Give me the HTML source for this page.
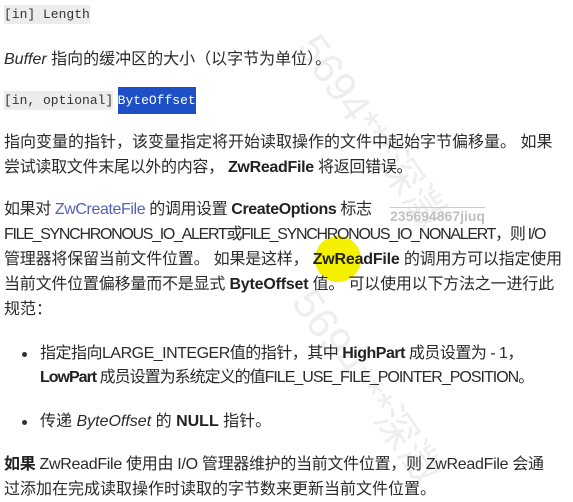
<!DOCTYPE html>
<html><head><meta charset="utf-8"><style>
body{margin:0;width:573px;height:502px;background:#fff;overflow:hidden;position:relative;font-family:"Liberation Sans","Noto Sans CJK SC",sans-serif;color:#2a2a2a;font-size:16px}
.l{position:absolute;left:4px;white-space:nowrap;line-height:20px}
.c{font-family:"Liberation Mono",monospace;font-size:13px;background:#ececec;color:#333;padding:2px 0;letter-spacing:0}
.hl{font-family:"Liberation Mono",monospace;font-size:13px;background:#1f4fc6;color:#fff;padding:6px 0;letter-spacing:0}
b{font-weight:bold;color:#222}
a{color:#5560b8;text-decoration:none}
.dot{position:absolute;left:22px;width:5px;height:5px;border-radius:50%;background:#333}
.wm{position:absolute;color:rgba(120,120,120,0.13);font-size:42px;white-space:nowrap;transform-origin:left top}
</style></head><body>
<div class="wm" style="left:335px;top:20px;transform:rotate(55deg)">5694***深澂</div>
<div class="wm" style="left:330px;top:275px;transform:rotate(55deg)">5694***深澂</div>
<div style="position:absolute;left:315px;top:236px;width:46px;height:46px;border-radius:50%;background:#f5ef00"></div>
<div class="l" style="top:4px"><span class="c">[in] Length</span></div>
<div class="l" style="top:50px"><i>Buffer</i> 指向的缓冲区的大小（以字节为单位）。</div>
<div class="l" style="top:90px"><span class="c">[in, optional]</span> <span class="hl">ByteOffset</span></div>
<div class="l" style="top:133px">指向变量的指针，该变量指定将开始读取操作的文件中起始字节偏移量。 如果</div>
<div class="l" style="top:158px;letter-spacing:-0.3px">尝试读取文件末尾以外的内容， <b>ZwReadFile</b> 将返回错误。</div>
<div class="l" style="top:200px;letter-spacing:-0.4px">如果对 <a>ZwCreateFile</a> 的调用设置 <b>CreateOptions</b> 标志</div>
<div style="position:absolute;left:390px;top:207px;color:#c0c0c0;font-size:14px;font-weight:bold;border-top:1px solid #ccc">235694867jiuq</div>
<div class="l" style="top:225px;letter-spacing:-1.3px">FILE_SYNCHRONOUS_IO_ALERT或FILE_SYNCHRONOUS_IO_NONALERT，则 I/O</div>
<div class="l" style="top:250px;letter-spacing:-0.2px">管理器将保留当前文件位置。 如果是这样， <b>ZwReadFile</b> 的调用方可以指定使用</div>
<div class="l" style="top:275px;letter-spacing:-0.2px">当前文件位置偏移量而不是显式 <b>ByteOffset</b> 值。 可以使用以下方法之一进行此</div>
<div class="l" style="top:300px">规范：</div>
<div class="dot" style="top:352px"></div>
<div class="l" style="left:40px;top:344px;letter-spacing:-0.5px">指定指向LARGE_INTEGER值的指针，其中 <b>HighPart</b> 成员设置为 - 1，</div>
<div class="l" style="left:40px;top:368px;letter-spacing:-1px"><b>LowPart</b> 成员设置为系统定义的值FILE_USE_FILE_POINTER_POSITION。</div>
<div class="dot" style="top:420px"></div>
<div class="l" style="left:40px;top:412px">传递 <i>ByteOffset</i> 的 <b>NULL</b> 指针。</div>
<div class="l" style="top:455px;letter-spacing:-0.3px"><b>如果</b> ZwReadFile 使用由 I/O 管理器维护的当前文件位置，则 ZwReadFile 会通</div>
<div class="l" style="top:480px">过添加在完成读取操作时读取的字节数来更新当前文件位置。</div>
</body></html>
